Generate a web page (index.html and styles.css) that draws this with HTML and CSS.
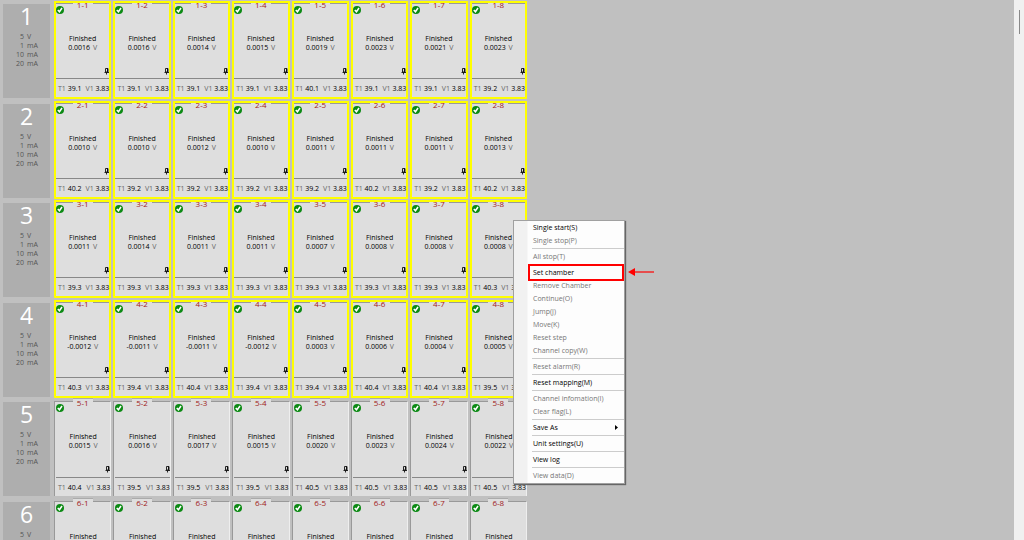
FILE: index.html
```html
<!DOCTYPE html>
<html lang="en">
<head>
    <meta charset="UTF-8">
    <meta name="viewport" content="width=device-width, initial-scale=1.0">
    <title>Channel monitor</title>
    <link rel="stylesheet" href="styles.css">
</head>
<body>
    <svg class="sprite" aria-hidden="true">
        <symbol id="icon-check" viewBox="0 0 18 18">
            <circle cx="9" cy="9" r="9" fill="#0c8a14"/>
            <path d="M4 9 L7.8 13 L13.5 4.5" fill="none" stroke="#fff" stroke-width="3.4"/>
        </symbol>
        <symbol id="icon-pin" viewBox="0 0 10 14">
            <path d="M3 1 H8 V8 H3 Z M1 9 H10 M5 9 V13" fill="none" stroke="#111" stroke-width="1.8"/>
            <path d="M6 1 H8 V8 H6 Z" fill="#111"/>
        </symbol>
    </svg>

    <main class="channels" id="channels"></main>

    <div class="scrollbar"><div class="scrollbar-thumb"></div></div>

    <div class="menu" role="menu">
        <button class="menu-item" role="menuitem">Single start(S)</button>
        <button class="menu-item" role="menuitem" disabled>Single stop(P)</button>
        <hr>
        <button class="menu-item" role="menuitem" disabled>All stop(T)</button>
        <hr>
        <button class="menu-item marked" role="menuitem">Set chamber
            <svg class="arrow" viewBox="0 0 26 8" aria-hidden="true">
                <path d="M0 4 L7 0 V8 Z" fill="#f00"/>
                <path d="M6 4 H26" stroke="#f00" stroke-width="1.2"/>
            </svg>
        </button>
        <button class="menu-item" role="menuitem" disabled>Remove Chamber</button>
        <button class="menu-item" role="menuitem" disabled>Continue(O)</button>
        <button class="menu-item" role="menuitem" disabled>Jump(J)</button>
        <button class="menu-item" role="menuitem" disabled>Move(K)</button>
        <button class="menu-item" role="menuitem" disabled>Reset step</button>
        <button class="menu-item" role="menuitem" disabled>Channel copy(W)</button>
        <hr>
        <button class="menu-item" role="menuitem" disabled>Reset alarm(R)</button>
        <hr>
        <button class="menu-item" role="menuitem">Reset mapping(M)</button>
        <hr>
        <button class="menu-item" role="menuitem" disabled>Channel infomation(I)</button>
        <button class="menu-item" role="menuitem" disabled>Clear flag(L)</button>
        <hr>
        <button class="menu-item" role="menuitem" aria-haspopup="true">Save As
            <svg class="submenu" viewBox="0 0 3 5" aria-hidden="true"><path d="M0 0 L3 2.5 L0 5 Z"/></svg>
        </button>
        <hr>
        <button class="menu-item" role="menuitem">Unit settings(U)</button>
        <hr>
        <button class="menu-item" role="menuitem">View log</button>
        <hr>
        <button class="menu-item" role="menuitem" disabled>View data(D)</button>
    </div>

    <script src="script.js"></script>
</body>
</html>
```
FILE: styles.css
```css
* {
    box-sizing: border-box;
}
body {
    margin: 0;
    height: 100vh;
    overflow: hidden;
    display: flex;
    justify-content: space-between;
    background-color: #c0c0c0;
    font-family: "Open Sans", "Noto Sans", sans-serif;
    font-size: 7px;
    line-height: 9px;
    color: #000;
}
.sprite {
    position: absolute;
    width: 0;
    height: 0;
}

/* units and their channels */
.channels {
    width: 527px;
    padding: 1px 0 0 3px;
}
.unit {
    display: flex;
    gap: 4px;
    height: 100px;
}
.unit:nth-child(even) {
    height: 99px;
}
.unit-info {
    width: 47px;
    height: 94px;
    margin-top: 3px;
    background-color: #aeaeae;
    color: #555;
}
.unit-number {
    margin: 0;
    padding-bottom: 3px;
    font-size: 23px;
    font-weight: 400;
    line-height: 25px;
    text-align: center;
    color: #fff;
}
.ranges {
    display: grid;
    grid-template-columns: 21px 1fr;
    column-gap: 3px;
    margin: 0;
}
.ranges dt {
    text-align: right;
}
.ranges dd {
    margin: 0;
}
.cells {
    flex: 1;
    display: grid;
    grid-template-columns: repeat(8, 1fr);
    column-gap: 2px;
}
.cell {
    position: relative;
    display: flex;
    flex-direction: column;
    height: 98px;
    padding: 2px 0 1px;
    text-align: center;
}
.cell.selected {
    padding: 0;
    border: 2px solid #ff0;
}
.cell-body {
    flex: 1;
    display: flex;
    flex-direction: column;
    padding-left: 1px;
    background-color: #dedede;
    border-top: 1px solid #999;
}
.selected .cell-body {
    padding-left: 0;
}
.cell:not(.selected) .cell-body {
    border-left: 1px solid #999;
    border-right: 1px solid #eee;
}
.cell-name {
    position: absolute;
    top: -1px;
    left: 50%;
    width: 20px;
    height: 8px;
    margin-left: -10px;
    background-color: #dedede;
    border-top: 1px solid #aaa;
    font-size: 8px;
    line-height: 8px;
    color: #a02020;
}
.selected .cell-name {
    top: 0;
    border: 0;
    line-height: 4px;
}
.check {
    width: 8px;
    height: 8px;
    margin-top: 2px;
}
.state {
    margin-top: 20px;
}
.unit-label {
    color: #666;
}
.voltage .unit-label {
    margin-left: 1px;
}
.pin {
    width: 5px;
    height: 7px;
    margin: 16px 0 0 auto;
}
.readings {
    display: flex;
    justify-content: space-between;
    margin-top: auto;
    padding: 5px 0 4px 2px;
    border-top: 1px solid #888;
    white-space: nowrap;
}

/* context menu */
.menu {
    position: absolute;
    left: 513px;
    top: 220px;
    width: 112px;
    padding: 0 0 1px 14px;
    display: flex;
    flex-direction: column;
    background: linear-gradient(to right, #f1f1f1 13px, #fdfdfd 14px);
    border: 1px solid #a0a0a0;
    box-shadow: 1px 1px 1px #666;
}
.menu-item {
    position: relative;
    height: 13px;
    padding: 0 0 0 5px;
    border: 0;
    background: none;
    font: inherit;
    line-height: 13px;
    text-align: left;
    color: #000;
}
.menu-item:disabled {
    color: #777;
}
.menu hr {
    width: calc(100% - 4px);
    height: 1px;
    margin: 1px 0 1px 4px;
    border: 0;
    background-color: #ccc;
}
.marked::before {
    content: "";
    position: absolute;
    inset: -2px 0;
    border: 2px solid #f00;
}
.arrow {
    position: absolute;
    left: 100px;
    top: 2px;
    width: 26px;
    height: 8px;
}
.submenu {
    position: absolute;
    right: 6px;
    top: 4px;
    width: 3px;
    height: 5px;
}

.scrollbar {
    width: 10px;
    padding: 10px 4px 0 5px;
    background-color: #f0f0f0;
}
.scrollbar-thumb {
    height: 24px;
    background-color: #888;
}
```
FILE: script.js
```javascript
// [voltage, temperature] for each channel of a unit
const units = [
    { selected: true, cells: [["0.0016", "39.1"], ["0.0016", "39.1"], ["0.0014", "39.1"], ["0.0015", "39.1"], ["0.0019", "40.1"], ["0.0023", "39.1"], ["0.0021", "39.1"], ["0.0023", "39.2"]] },
    { selected: true, cells: [["0.0010", "40.2"], ["0.0010", "39.2"], ["0.0012", "39.2"], ["0.0010", "39.2"], ["0.0011", "39.2"], ["0.0011", "40.2"], ["0.0011", "39.2"], ["0.0013", "40.2"]] },
    { selected: true, cells: [["0.0011", "39.3"], ["0.0014", "39.3"], ["0.0011", "39.3"], ["0.0011", "39.3"], ["0.0007", "39.3"], ["0.0008", "39.3"], ["0.0008", "39.3"], ["0.0008", "40.3"]] },
    { selected: true, cells: [["-0.0012", "40.3"], ["-0.0011", "39.4"], ["-0.0011", "40.4"], ["-0.0012", "39.4"], ["0.0003", "39.4"], ["0.0006", "40.4"], ["0.0004", "40.4"], ["0.0005", "39.5"]] },
    { selected: false, cells: [["0.0015", "40.4"], ["0.0016", "39.5"], ["0.0017", "39.5"], ["0.0015", "39.5"], ["0.0020", "40.5"], ["0.0023", "40.5"], ["0.0024", "40.5"], ["0.0022", "40.5"]] },
    { selected: false, cells: [["0.0015", "39.5"], ["0.0016", "39.5"], ["0.0017", "39.5"], ["0.0015", "39.5"], ["0.0020", "40.5"], ["0.0023", "40.5"], ["0.0024", "40.5"], ["0.0022", "40.5"]] }
];

function cellHtml(unit, channel, cell, selected) {
    return `
        <section class="cell${selected ? " selected" : ""}">
            <div class="cell-body">
                <svg class="check"><use href="#icon-check"/></svg>
                <div class="state">Finished</div>
                <div class="voltage">${cell[0]} <span class="unit-label">V</span></div>
                <svg class="pin"><use href="#icon-pin"/></svg>
                <div class="readings">
                    <span><span class="unit-label">T1</span> ${cell[1]}</span>
                    <span><span class="unit-label">V1</span> 3.83</span>
                </div>
            </div>
            <div class="cell-name">${unit}-${channel}</div>
        </section>`;
}

document.getElementById("channels").innerHTML = units.map((unit, i) => `
    <div class="unit">
        <div class="unit-info">
            <h2 class="unit-number">${i + 1}</h2>
            <dl class="ranges">
                <dt>5</dt><dd>V</dd>
                <dt>1</dt><dd>mA</dd>
                <dt>10</dt><dd>mA</dd>
                <dt>20</dt><dd>mA</dd>
            </dl>
        </div>
        <div class="cells">${unit.cells.map((cell, j) => cellHtml(i + 1, j + 1, cell, unit.selected)).join("")}</div>
    </div>`).join("");
```
